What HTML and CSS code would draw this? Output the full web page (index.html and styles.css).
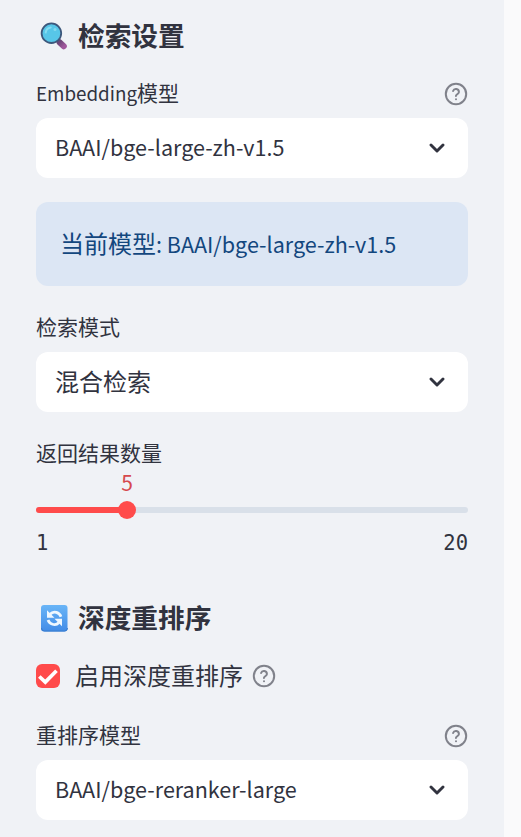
FILE: index.html
```html
<!DOCTYPE html>
<html lang="zh-CN">
<head>
<meta charset="utf-8">
<title>检索设置</title>
<link rel="stylesheet" href="styles.css">
</head>
<body>
<svg class="defs" aria-hidden="true">
  <symbol id="help" viewBox="0 0 24 24"><g fill="none" stroke="currentColor" stroke-width="2" stroke-linecap="round" stroke-linejoin="round"><circle cx="12" cy="12" r="10.2"/><path d="M9.09 9a3 3 0 0 1 5.83 1c0 2-3 2.5-3 4M12 17.3h.01"/></g></symbol>
  <symbol id="chevron" viewBox="0 0 16 10"><path d="M2 2l6 6 6-6" fill="none" stroke="currentColor" stroke-width="2.9" stroke-linecap="round" stroke-linejoin="round"/></symbol>
</svg>
<aside class="sidebar">
  <h3 class="heading">
    <svg class="emoji" viewBox="0 0 28 28"><defs><linearGradient id="handle" x1="0" y1="0" x2="1" y2="1"><stop stop-color="#6c4779"/><stop offset="1" stop-color="#a0579c"/></linearGradient></defs><path d="M16.5 17.5l3 3" stroke="#596170" stroke-width="3"/><path d="M19.5 20.3l4.3 4" stroke="url(#handle)" stroke-width="6" stroke-linecap="round"/><circle cx="11.4" cy="11.2" r="9.8" fill="#57c6e8" stroke="#3d587c" stroke-width="1.8"/><path d="M5.7 10.5a6 6 0 0 1 5-5" fill="none" stroke="#85dcf1" stroke-width="2" stroke-linecap="round"/><circle cx="15" cy="7.4" r="1.5" fill="#82d9ef"/></svg>
    <span>检索设置</span>
  </h3>
  <div class="label label-first"><span><span class="latin-label">Embedding</span>模型</span><svg class="help"><use href="#help"/></svg></div>
  <div class="select"><span class="latin">BAAI/bge-large-zh-v1.5</span><svg class="chevron"><use href="#chevron"/></svg></div>
  <div class="info"><span>当前模型<span class="latin">: BAAI/bge-large-zh-v1.5</span></span></div>
  <div class="label label-mode"><span>检索模式</span></div>
  <div class="select"><span>混合检索</span><svg class="chevron"><use href="#chevron"/></svg></div>
  <div class="label label-count"><span>返回结果数量</span></div>
  <div class="slider">
    <div class="value">5</div>
    <div class="track"><div class="fill"></div><div class="thumb"></div></div>
    <div class="range"><span>1</span><span>20</span></div>
  </div>
  <h3 class="heading heading-rerank">
    <svg class="emoji" viewBox="0 0 28 28"><defs><linearGradient id="tile" x1="0" y1="0" x2="0" y2="1"><stop stop-color="#69b5f7"/><stop offset="1" stop-color="#428ce7"/></linearGradient></defs><rect x="1" y="1" width="26.5" height="26.5" rx="3" fill="url(#tile)"/><path d="M1.5 24q0 3 3 3h20q3 0 3-3" fill="none" stroke="#397ccc"/><g fill="none" stroke="#eff8ff" stroke-width="2.8"><path d="M10 10.2c4-4.2 9.5-1.4 11 2.5"/><path d="M19 18.5c-4 4.2-9.5 1.4-11-2.5"/></g><path d="M7 6.3v7.5h7.5zM22 22.3v-7.5h-7.5z" fill="#eff8ff"/></svg>
    <span>深度重排序</span>
  </h3>
  <div class="check">
    <span class="box"><svg viewBox="0 0 24 24"><path d="M3.3 12.5l6 5.6L20.5 6.7" fill="none" stroke="#fff" stroke-width="3.7"/></svg></span>
    <span>启用深度重排序</span><svg class="help"><use href="#help"/></svg>
  </div>
  <div class="label label-rerank"><span>重排序模型</span><svg class="help"><use href="#help"/></svg></div>
  <div class="select"><span class="latin">BAAI/bge-reranker-large</span><svg class="chevron"><use href="#chevron"/></svg></div>
</aside>
</body>
</html>
```
FILE: styles.css
```css
* { box-sizing: border-box; }
body {
  margin: 0;
  height: 837px;
  overflow: hidden;
  background: #fafafb;
  color: #31333f;
  font-family: "Noto Sans CJK SC", sans-serif;
}
.defs { position: absolute; width: 0; height: 0; }
svg { display: block; flex-shrink: 0; }
.sidebar {
  width: 504px;
  height: 837px;
  padding: 18px 36px 0;
  background: #f0f2f6;
}
.heading {
  display: flex;
  align-items: center;
  gap: 10px;
  height: 36px;
  margin: 0;
  padding-left: 4px;
  font-size: 26.7px;
  line-height: 36px;
  font-weight: 700;
}
.heading > span,
.label > span,
.select > span,
.info > span,
.check > span:not(.box) { padding-bottom: 2px; }
.emoji { width: 28px; height: 28px; }
.label {
  display: flex;
  align-items: center;
  justify-content: space-between;
  height: 30px;
  margin-bottom: 10px;
  font-size: 21px;
  line-height: 30px;
}
.label-first { margin-top: 24px; }
.label-mode { margin-top: 26px; }
.label-count { margin-top: 26px; margin-bottom: 0; }
.label-rerank { margin-top: 26px; }
.latin-label { font-size: 18.8px; }
.latin { font-size: 21.55px; }
.help { width: 24px; height: 24px; color: #80828b; }
.label .help { margin-top: 2px; }
.select {
  display: flex;
  align-items: center;
  justify-content: space-between;
  height: 60px;
  padding: 0 23px 0 19px;
  border-radius: 12px;
  background: #fff;
  font-size: 24px;
  line-height: 36px;
}
.chevron { width: 16px; height: 10px; }
.info {
  display: flex;
  align-items: center;
  height: 84px;
  margin-top: 24px;
  padding-left: 24px;
  border-radius: 12px;
  background: #dce6f4;
  color: #13477e;
  font-size: 24px;
  line-height: 36px;
}
.value {
  width: 182px;
  height: 30px;
  text-align: center;
  color: #d6494e;
  font-size: 21px;
  line-height: 29px;
}
.track {
  position: relative;
  height: 6px;
  margin-top: 9px;
  border-radius: 3px;
  background: #d9e0e9;
}
.fill { width: 91px; height: 6px; border-radius: 3px; background: #ff4b4b; }
.thumb {
  position: absolute;
  top: -6px;
  left: 82px;
  width: 18px;
  height: 18px;
  border-radius: 50%;
  background: #ff4b4b;
}
.range {
  display: flex;
  justify-content: space-between;
  height: 30px;
  margin-top: 15px;
  font-family: "DejaVu Sans Mono", monospace;
  font-size: 20.5px;
  line-height: 30px;
}
.heading-rerank { margin-top: 42px; }
.check {
  display: flex;
  align-items: center;
  height: 36px;
  margin-top: 22px;
  font-size: 24px;
  line-height: 36px;
}
.check .help { margin-left: 9px; }
.box {
  width: 24px;
  height: 24px;
  margin-right: 15px;
  border-radius: 6px;
  background: #ff4b4b;
}
```
